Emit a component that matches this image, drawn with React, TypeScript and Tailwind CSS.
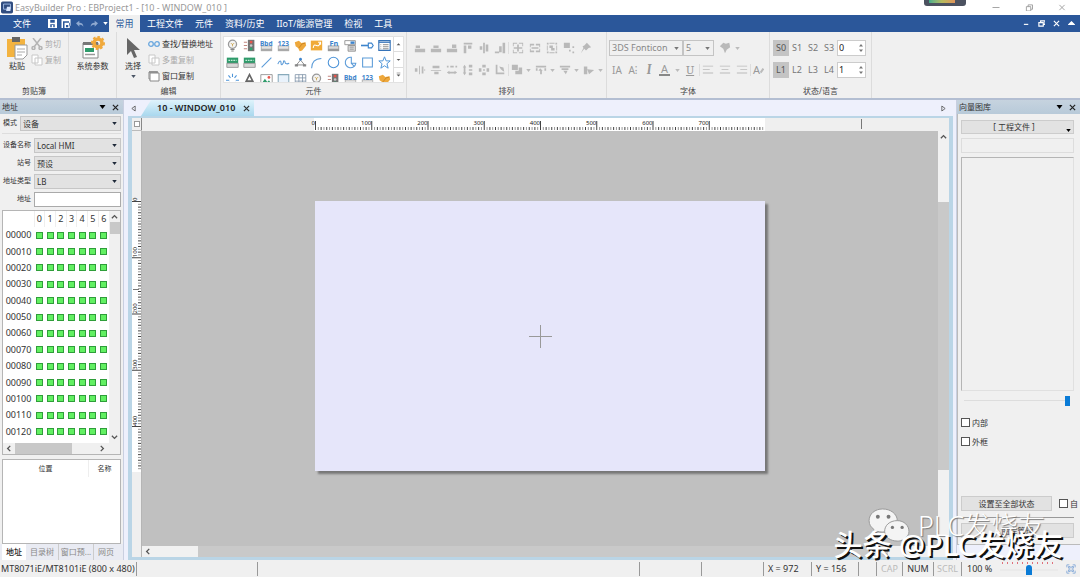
import React from 'react';

type IconName =
  | 'bulb' | 'traffic' | 'word' | 'num' | 'tag' | 'swap' | 'fn' | 'combo' | 'slide' | 'list'
  | 'green' | 'line' | 'wave' | 'poly' | 'arc' | 'circle' | 'pie' | 'rect' | 'star'
  | 'burst' | 'letter' | 'picture' | 'frame' | 'grid';

const svgText = '"Noto Sans", "Noto Sans CJK SC", sans-serif';

const shapes: Record<IconName, React.ReactNode> = {
  bulb: (
    <>
      <circle cx="8" cy="6.5" r="5" fill="#f3f3f3" stroke="#999" strokeWidth="1.6" />
      <path d="M8 9V6M6 5l2 2 2-2" stroke="#c9a24a" fill="none" />
      <path d="M5.5 12h5v1.5h-5zM6.5 14h3v1.5h-3z" fill="#888" />
    </>
  ),
  traffic: (
    <>
      <path d="M6 1h8v14H6z" fill="#747474" />
      <circle cx="10" cy="3.8" r="1.8" fill="#e8554c" />
      <circle cx="10" cy="8" r="1.6" fill="#c9c9c9" />
      <circle cx="10" cy="12.2" r="1.8" fill="#2fa46d" />
      <path d="M1 4h4M1 8h4M1 12h4" stroke="#b46b62" />
    </>
  ),
  word: (
    <>
      <path d="M1 8h14v7H1z" fill="#a9a9a9" />
      <path d="M2 9h12v3H2z" fill="#e3e3e3" />
      <text x="0" y="8" fontSize="8" fontWeight="700" fill="#3d84cc" fontFamily={svgText}>Bbd</text>
    </>
  ),
  num: (
    <>
      <path d="M1 8h14v7H1z" fill="#a9a9a9" />
      <path d="M2 9h12v3H2z" fill="#e3e3e3" />
      <text x="1" y="8" fontSize="8" fontWeight="700" fill="#3d84cc" fontFamily={svgText}>123</text>
    </>
  ),
  tag: (
    <>
      <path d="M1 4l5-2 3 3 5-1 1 4-5 6-3 1-2-4-3-2z" fill="#eea83c" />
      <path d="M6 11l4-5 4-1" stroke="#c57f1c" fill="none" />
    </>
  ),
  swap: (
    <>
      <path d="M1 2h14v12H1z" fill="#f0aa37" />
      <path d="M4 11c0-4 2-4 4-3s4 0 4-3M10 4h3v3" stroke="#fff" strokeWidth="1.3" fill="none" />
    </>
  ),
  fn: (
    <>
      <path d="M1 8h14v7H1z" fill="#999" />
      <path d="M2 9h12v3H2z" fill="#d8d8d8" />
      <text x="3" y="8" fontSize="9" fontWeight="700" fill="#3d84cc" fontFamily={svgText}>Fn</text>
    </>
  ),
  combo: (
    <>
      <path d="M1 2h13v5H1z" fill="#fff" stroke="#888" />
      <path d="M8 3h5v3H8z" fill="#3d84cc" />
      <path d="M5 8h9v7H5z" fill="#ddd" stroke="#888" />
      <path d="M7 10h5M7 12.5h5" stroke="#888" />
    </>
  ),
  slide: (
    <>
      <path d="M0 8h9" stroke="#3d84cc" strokeWidth="2" />
      <path d="M9 5h4l2 3-2 3H9z" fill="#fff" stroke="#3d84cc" strokeWidth="1.4" />
    </>
  ),
  list: (
    <>
      <path d="M1 2h14v12H1z" fill="#fff" stroke="#3673b8" strokeWidth="1.4" />
      <path d="M1 4h14" stroke="#3673b8" strokeWidth="1.5" />
      <path d="M6 7h7M6 9.5h7M6 12h7M3 7h1M3 9.5h1M3 12h1" stroke="#777" />
    </>
  ),
  green: (
    <>
      <path d="M1 2h14v7H1z" fill="#2f9b6b" />
      <path d="M3 5.5h10" stroke="#c8ecd9" strokeWidth="1.6" strokeDasharray="2 1" />
      <path d="M1 9h14v5H1z" fill="#d8d8d8" stroke="#8c8c8c" />
    </>
  ),
  line: <path d="M2 14L14 2" stroke="#5b9bd8" strokeWidth="1.3" />,
  wave: <path d="M1 10c2-5 4-5 4-1s3 0 3-2 2-1 2 1 3 2 5 1" stroke="#5b9bd8" strokeWidth="1.3" fill="none" />,
  poly: (
    <>
      <path d="M3 11L8 5l5 6z" fill="none" stroke="#777" />
      <circle cx="8" cy="4" r="1.7" fill="#3d84cc" />
      <path d="M1 10h4v3H1zM11 10h4v3h-4z" fill="#888" />
    </>
  ),
  arc: <path d="M2 15C2 8 6 3 14 3" stroke="#5b9bd8" strokeWidth="1.3" fill="none" />,
  circle: <circle cx="8" cy="8" r="6.5" fill="none" stroke="#4d94d8" strokeWidth="1.3" />,
  pie: <path d="M9 1.5a6.5 6.5 0 1 0 5.5 7.5H9zM9 9l4 4" fill="none" stroke="#5b9bd8" strokeWidth="1.3" />,
  rect: <path d="M2 2.5h12v11H2z" fill="none" stroke="#5b9bd8" strokeWidth="1.3" />,
  star: <path d="M8 1l2 5h5l-4 3.500 1.500 5.500L8 12l-4.500 3L5 9.500 1 6h5z" fill="none" stroke="#4d94d8" strokeWidth="1.2" />,
  burst: <path d="M8 1v4M3 3l2.500 3M13 3l-2.500 3M0 9h4M12 9h4M3 14l2-3M13 14l-2-3M8 12v3" stroke="#4d94d8" strokeWidth="1.300" />,
  letter: <path d="M2 14L8 2l6 12M4.500 10h7" fill="none" stroke="#666" strokeWidth="2" />,
  picture: (
    <>
      <path d="M1 2h14v12H1z" fill="#fff" stroke="#888" />
      <path d="M2 13l4-6 3 4 2-2 3 4z" fill="#2f9b6b" />
      <circle cx="11" cy="5.500" r="1.700" fill="#e8554c" />
    </>
  ),
  frame: <path d="M1.500 2h13v12h-13z" fill="#e9f2fb" stroke="#8ab" strokeWidth="1.300" />,
  grid: <path d="M1.500 2h13v12h-13zM1.500 6h13M1.500 10h13M6 2v12M10.500 2v12" fill="#fff" stroke="#7f93a8" />,
};

const gallery: IconName[] = [
  'bulb', 'traffic', 'word', 'num', 'tag', 'swap', 'fn', 'combo', 'slide', 'list',
  'green', 'green', 'line', 'wave', 'poly', 'arc', 'circle', 'pie', 'rect', 'star',
  'burst', 'letter', 'picture', 'frame', 'grid', 'bulb', 'traffic', 'word', 'num', 'tag',
];

// Disabled arrange tools, drawn on a 14px grid
const arrangeTop = [
  'M1 8h12v4H1zM2 4h5v3H2z',
  'M1 8h12v4H1zM4 4h6v3H4z',
  'M1 8h12v4H1zM7 3h5v4H7z',
  'M2 1h10v2H2zM2 4h3v9H2zM7 4h4v4H7z',
  'M6 1h2v12H6zM9 3h3v8H9zM2 5h3v4H2z',
  'M10 1h3v12h-3zM6 5h3v7H6zM1 11h5v2H1z',
];
const arrangeTopB = [
  'M1 1h5v1H2v3H1zM8 1h5v4h-1V2H8zM1 9h1v3h4v1H1zM12 9h1v4H8v-1h4zM6 3h2v8H6zM2 6h10v2H2z',
  'M1 2h5v2H2v2H1zM8 2h5v4h-1V4H8zM1 8h1v2h4v2H1zM12 8h1v4H8v-2h4zM3 6h8v2H3z',
  'M1 1h2v2H1zM11 1h2v2h-2zM1 11h2v2H1zM11 11h2v2h-2zM4 1h6v1H4zM4 12h6v1H4zM1 4h1v6H1zM12 4h1v6h-1zM4 4h4v3H4zM6 7h4v3H6z',
  'M1 1h7v6H1zM7 9h2v2H7zM11 5h2v2h-2zM11 11h2v2h-2z',
  'M8 1l5 5-3 1-2 2-1 1-2-2-4 5 3-6-1-2 2-1z',
];
const arrangeBottom = [
  'M1 5h3v4H1zM6 2h1v10H6zM9 3h2v8H9zM12 6h1v2h-1z',
  'M3 2h8v3H3zM1 7h12v1H1zM5 9h5v3H5z',
  'M1 2h2v2H1zM5 2h4v2H5zM11 2h2v2h-2zM1 10l3-2v1h6V8l3 2-3 2v-1H4v1z',
  'M3 1l2 3H4v6h1l-2 3-2-3h1V4H1zM8 1h4v3H8zM8 6h4v2H8zM8 10h4v3H8z',
  'M5 1h4v3H5zM1 5h3v4H1zM10 5h3v4h-3zM5 10h4v3H5zM6 6h2v2H6z',
  'M2 1h2v9h8v2H2zM6 3l5 1 1 5-2-1-2-2z',
];
const arrangeBottomB = [
  'M1 1h7v6H1zM5 8h4v4H5zM9 4h4v8H9z',
  'M1 2h12v2H1zM6 5l3 3H8v4H6V8H4zM1 5h2v3H1zM11 5h2v3h-2z',
  'M1 2h12v2H1zM3 5h8v2H3zM5 8h5l-2 4z',
  'M1 3h4v9H1zM5 6l8 1-6 5z',
];

function Glyph({ d }: { d: string }) {
  return (
    <svg viewBox="0 0 14 14" className="h-3 w-3" fill="#b9b9b9">
      <path d={d} />
    </svg>
  );
}

function Caret({ className = 'text-gray-800' }: { className?: string }) {
  return (
    <svg viewBox="0 0 6 4" className={`h-[3px] w-[5px] shrink-0 ${className}`} fill="currentColor">
      <path d="M0 0h6L3 4z" />
    </svg>
  );
}

function Chevron({ d }: { d: string }) {
  return (
    <svg viewBox="0 0 8 8" className="h-[7px] w-[7px]" fill="none" stroke="#555" strokeWidth="1.500">
      <path d={d} />
    </svg>
  );
}

function Group({ label, className, children }: { label?: string; className: string; children?: React.ReactNode }) {
  return (
    <section className={`flex h-full shrink-0 flex-col border-r border-[#dcdcdc] ${className}`}>
      <div className="min-h-0 flex-1">{children}</div>
      <div className="h-[15px] text-center text-[8px] leading-[15px] text-[#444]">{label}</div>
    </section>
  );
}

function Spin({ value, label }: { value: string; label: string }) {
  return (
    <div className="flex h-4 w-[29px] items-center border border-[#ccc] bg-white pr-[2px]">
      <input aria-label={label} defaultValue={value} className="w-full min-w-0 px-[1px] text-[9px] text-[#222] outline-none" />
      <svg viewBox="0 0 5 12" className="h-3 w-1 shrink-0" fill="#777">
        <path d="M0 4h5L2.500 1zM0 8h5l-2.500 3z" />
      </svg>
    </div>
  );
}

function StateRow({ items, value, name }: { items: string[]; value: string; name: string }) {
  return (
    <div className="flex h-[22px] items-center">
      {items.map((item) => (
        <button
          key={item}
          type="button"
          className={`h-4 w-4 text-[9px] leading-4 ${item === 'S0' || item === 'L1' ? 'bg-[#c4c4c4] text-[#555]' : 'text-[#777]'}`}
        >
          {item}
        </button>
      ))}
      <Spin value={value} label={name} />
    </div>
  );
}

function Ribbon() {
  const small = 'flex h-4 items-center gap-[2px] text-[8px] whitespace-nowrap';
  return (
    <div className="flex h-[68px] shrink-0 overflow-hidden border-b-2 border-[#b3bed2] bg-[#f0f0f0]">
      <Group label="剪贴簿" className="w-[69px]">
        <div className="flex gap-1 pt-1 pl-[7px]">
          <button type="button" className="flex w-5 flex-col items-center text-[8px] leading-[12px] text-[#333]">
            <svg viewBox="0 0 22 24" className="h-6 w-[22px]">
              <path d="M1 3h18v18H1z" fill="#f3b340" />
              <path d="M6 1h8v5H6z" fill="#666" />
              <path d="M9 9h12v10l-4 4H9z" fill="#fff" stroke="#999" />
              <path d="M11 13h8M11 16h8M11 19h5" stroke="#aaa" />
            </svg>
            <span className="whitespace-nowrap">粘贴</span>
          </button>
          <div className="text-[#aaa]">
            <button type="button" className={small}>
              <svg viewBox="0 0 12 12" className="h-3 w-3" fill="none" stroke="#b4b4b4" strokeWidth="1.500">
                <path d="M2 0l7 9M10 0L3 9" />
                <circle cx="2.500" cy="10" r="1.500" />
                <circle cx="9.500" cy="10" r="1.500" />
              </svg>
              剪切
            </button>
            <button type="button" className={small}>
              <svg viewBox="0 0 12 12" className="h-3 w-3" fill="#fff" stroke="#c8c8c8">
                <path d="M1 1h6v8H1zM4 4h7v7H4z" />
              </svg>
              复制
            </button>
          </div>
        </div>
      </Group>
      <Group className="w-12">
        <button type="button" className="flex w-full flex-col items-center pt-1 text-[8px] leading-[12px] text-[#333]">
          <svg viewBox="0 0 24 24" className="h-6 w-6">
            <path d="M2 7h15v15H2z" fill="#fff" stroke="#888" />
            <path d="M2 6h15v3H2z" fill="#777" />
            <path d="M4 12h9v4H4z" fill="#2f9b6b" />
            <path d="M4 18.500h10" stroke="#999" strokeWidth="1.500" />
            <circle cx="17" cy="7" r="4" fill="none" stroke="#f0a93c" strokeWidth="3.500" />
            <circle cx="17" cy="7" r="6" fill="none" stroke="#f0a93c" strokeWidth="2" strokeDasharray="2.500 2" />
          </svg>
          系统参数
        </button>
      </Group>
      <Group label="编辑" className="w-[104px]">
        <div className="flex gap-1 pt-1 pl-[5px]">
          <button type="button" className="flex w-[22px] flex-col items-center text-[8px] leading-[12px] text-[#333]">
            <svg viewBox="0 0 16 24" className="h-6 w-4">
              <path d="M2 2v17l4-4 3 7 3-1-3-7h6z" fill="#666" />
            </svg>
            <span className="whitespace-nowrap">选择</span>
            <Caret className="mt-[3px] text-gray-600" />
          </button>
          <div className="text-[#333]">
            <button type="button" className={small}>
              <svg viewBox="0 0 12 12" className="h-3 w-3" fill="none" stroke="#6aa7de" strokeWidth="1.300">
                <circle cx="3" cy="6" r="2.300" />
                <circle cx="9" cy="6" r="2.300" />
              </svg>
              查找/替换地址
            </button>
            <button type="button" className={`${small} text-[#aaa]`}>
              <svg viewBox="0 0 12 12" className="h-3 w-3" fill="#fff" stroke="#c8c8c8">
                <path d="M1 1h6v8H1zM4 4h7v7H4z" />
              </svg>
              多重复制
            </button>
            <button type="button" className={small}>
              <svg viewBox="0 0 12 12" className="h-3 w-3" fill="#fff" stroke="#888">
                <path d="M1 2h8v7H1z" />
                <path d="M2 3h9v8H2z" />
                <path d="M1 2h9" strokeWidth="1.500" />
              </svg>
              窗口复制
            </button>
          </div>
        </div>
      </Group>
      <Group label="元件" className="w-[186px]">
        <div className="mt-1 ml-[2px] flex h-[47px] w-[181px] border border-[#e2e2e2] bg-white">
          <div className="grid flex-1 auto-rows-[17px] grid-cols-10 overflow-hidden">
            {gallery.map((name, i) => (
              <button key={i} type="button" aria-label={name} className="flex items-center justify-center">
                <svg viewBox="0 0 16 16" className="h-[13px] w-[13px]">{shapes[name]}</svg>
              </button>
            ))}
          </div>
          <div className="flex w-[10px] flex-col divide-y divide-[#ddd] border-l border-[#ddd]">
            {['M1 5h6L4 2z', 'M1 3h6L4 6z', 'M1 1h6v1H1zM1 4h6L4 7z'].map((d) => (
              <button key={d} type="button" aria-label="scroll" className="flex flex-1 items-center justify-center">
                <svg viewBox="0 0 8 8" className="h-[5px] w-[5px]" fill="#555"><path d={d} /></svg>
              </button>
            ))}
          </div>
        </div>
      </Group>
      <Group label="排列" className="w-[200px]">
        <div className="flex flex-col pt-[5px] pl-[5px]">
          <div className="flex h-[22px] items-center">
            <div className="flex w-[97px] justify-around border-r border-[#ddd]">
              {arrangeTop.map((d) => <Glyph key={d} d={d} />)}
            </div>
            <div className="flex w-[86px] justify-around">
              {arrangeTopB.map((d) => <Glyph key={d} d={d} />)}
            </div>
          </div>
          <div className="flex h-[22px] items-center">
            <div className="flex w-[97px] justify-around border-r border-[#ddd]">
              {arrangeBottom.map((d) => <Glyph key={d} d={d} />)}
            </div>
            <div className="flex w-[96px] justify-around">
              {arrangeBottomB.map((d) => (
                <span key={d} className="flex items-center gap-[3px]">
                  <Glyph d={d} />
                  <Caret className="text-[#bbb]" />
                </span>
              ))}
            </div>
          </div>
        </div>
      </Group>
      <Group label="字体" className="w-[163px]">
        <div className="pt-[5px] pl-[2px]">
          <div className="flex h-[22px] items-center text-[#888]">
            <Select id="font" value="3DS Fonticon" className="w-[74px]" dim />
            <Select id="size" value="5" className="w-[31px]" dim />
            <span className="ml-[5px] flex items-center gap-1">
              <Glyph d="M1 5l4-4 3 1 4-1 1 5-4 3-2 4-2-5z" />
              <Caret className="text-[#bbb]" />
            </span>
          </div>
          <div className="flex h-[22px] items-center text-[10px] text-[#999]">
            <button type="button" className="w-4">IA</button>
            <button type="button" className="w-4">A⁝</button>
            <button type="button" className="w-4 font-serif text-[13px] font-bold italic">I</button>
            <button type="button" className="mx-[2px] border-b-2 border-[#888] px-[2px] text-[11px] leading-[10px]">A</button>
            <Caret className="mx-[3px] text-[#bbb]" />
            <button type="button" className="w-[14px] font-serif text-[12px] underline">U</button>
            <span className="mx-[2px] flex gap-[5px] border-x border-[#ddd] px-[2px]">
              {['M1 2h12v1H1zM1 6h8v1H1zM1 10h12v1H1z', 'M1 2h12v1H1zM3 6h8v1H3zM1 10h12v1H1z', 'M1 2h12v1H1zM5 6h8v1H5zM1 10h12v1H1z'].map((d) => (
                <Glyph key={d} d={d} />
              ))}
            </span>
            <button type="button" className="flex items-center text-[11px]">
              A
              <svg viewBox="0 0 6 10" className="h-2 w-1" fill="none" stroke="#bbb" strokeWidth="3"><path d="M1 9l4-6" /></svg>
            </button>
          </div>
        </div>
      </Group>
      <Group label="状态/语言" className="w-[102px]">
        <div className="pt-[5px] pl-[3px]">
          <StateRow items={['S0', 'S1', 'S2', 'S3']} value="0" name="state" />
          <StateRow items={['L1', 'L2', 'L3', 'L4']} value="1" name="language" />
        </div>
      </Group>
    </div>
  );
}

function Select({ id, value, className, dim }: { id: string; value: string; className: string; dim?: boolean }) {
  return (
    <div className={`relative flex items-center border ${dim ? 'h-4 border-[#c4c4c4] bg-[#f0f0f0]' : 'h-[15px] border-[#c6c6c6] bg-[#e2e2e2]'} ${className}`}>
      <select
        id={id}
        aria-label={dim ? id : undefined}
        defaultValue={value}
        className={`h-full w-full appearance-none px-[2px] leading-[12px] outline-none ${dim ? 'text-[9px]' : 'text-[8px]'}`}
      >
        <option>{value}</option>
      </select>
      <div className="pointer-events-none absolute right-[3px]">
        <Caret className={dim ? 'text-[#777]' : 'text-gray-800'} />
      </div>
    </div>
  );
}

function PanelHeader({ title }: { title: string }) {
  return (
    <header className="flex h-[14px] shrink-0 items-center bg-linear-to-b from-[#c6d3df] to-[#b8cad9] px-[2px] text-[8px] text-[#333]">
      <h2 className="flex-1">{title}</h2>
      <button type="button" aria-label="menu" className="mr-[6px]">
        <svg viewBox="0 0 6 4" className="h-1 w-[7px]"><path d="M0 0h6L3 4z" /></svg>
      </button>
      <button type="button" aria-label="close" className="mr-[2px]">
        <svg viewBox="0 0 8 8" className="h-[7px] w-[7px]" stroke="#222" strokeWidth="1.400"><path d="M1 1l6 6M7 1L1 7" /></svg>
      </button>
    </header>
  );
}

const addresses = ['00000', '00010', '00020', '00030', '00040', '00050', '00060', '00070', '00080', '00090', '00100', '00110', '00120'];
const bits = [0, 1, 2, 3, 4, 5, 6];

function AddressPanel() {
  const row = 'flex items-center justify-end gap-[3px] text-[7px] whitespace-nowrap';
  return (
    <aside className="flex w-[124px] shrink-0 flex-col border-r border-[#c9cfe0] bg-[#f0f0f0]">
      <PanelHeader title="地址" />
      <form className="flex flex-col gap-[3px] px-[2px] pt-[2px]">
        <div className={`${row} mb-[1px] border-b border-[#ddd] pb-[2px]`}>
          <label htmlFor="mode">模式</label>
          <Select id="mode" value="设备" className="w-[101px]" />
        </div>
        <div className={row}>
          <label htmlFor="device">设备名称</label>
          <Select id="device" value="Local HMI" className="w-[87px]" />
        </div>
        <div className={row}>
          <label htmlFor="station">站号</label>
          <Select id="station" value="预设" className="w-[87px]" />
        </div>
        <div className={row}>
          <label htmlFor="type">地址类型</label>
          <Select id="type" value="LB" className="w-[87px]" />
        </div>
        <div className={row}>
          <label htmlFor="addr">地址</label>
          <input id="addr" className="h-[15px] w-[87px] border border-[#aaa] bg-white px-[2px] text-[8px]" />
        </div>
      </form>
      <div className="mx-[2px] mt-[3px] flex min-h-0 flex-1 flex-col border border-[#b5b5b5] bg-white">
        <div className="flex min-h-0 flex-1">
          <div className="min-w-0 flex-1 overflow-hidden">
            <table className="h-[229px] w-full table-fixed border-collapse text-[9px] leading-[16px] text-[#333]">
              <thead>
                <tr>
                  <th className="w-[31px]" />
                  {bits.map((b) => <th key={b} className="border-l border-[#eee] p-0 font-normal">{b}</th>)}
                </tr>
              </thead>
              <tbody>
                {addresses.map((a) => (
                  <tr key={a}>
                    <th className="p-0 text-center font-normal">{a}</th>
                    {bits.map((b) => (
                      <td key={b} className="p-0">
                        <div className="mx-auto h-[7px] w-[7px] border border-[#2f9e3a] bg-[#62f062]" />
                      </td>
                    ))}
                  </tr>
                ))}
              </tbody>
            </table>
          </div>
          <div className="flex w-[11px] flex-col items-center justify-between bg-[#f0f0f0] py-[2px]">
            <Chevron d="M1 6l3-3 3 3" />
            <div className="mt-[2px] mb-auto h-3 w-[10px] bg-[#c8c8c8]" />
            <Chevron d="M1 2l3 3 3-3" />
          </div>
        </div>
        <div className="flex h-[11px] items-center bg-[#f0f0f0] pr-[14px] pl-[2px]">
          <Chevron d="M6 1L3 4l3 3" />
          <div className="mx-[3px] h-full w-[57px] bg-[#c8c8c8]" />
          <div className="ml-auto"><Chevron d="M2 1l3 3-3 3" /></div>
        </div>
      </div>
      <div className="mx-[2px] mt-1 flex h-[85px] border border-[#b5b5b5] bg-white text-center text-[7px] leading-[17px] text-[#333]">
        <div className="w-[85px]">位置</div>
        <div className="h-[17px] flex-1 border-l border-[#eee]">名称</div>
      </div>
      <nav className="flex h-4 items-center bg-[#e9ebf3] pl-[2px] text-[8px] whitespace-nowrap text-[#888]">
        <button type="button" className="h-full w-6 bg-white font-medium text-[#222]">地址</button>
        <button type="button" className="h-full w-[33px] border-r border-[#ccc]">目录树</button>
        <button type="button" className="h-full w-[35px] border-r border-[#ccc]">窗口预...</button>
        <button type="button" className="h-full w-6">网页</button>
      </nav>
    </aside>
  );
}

const UNIT = 45 / 8;

function RulerTop() {
  return (
    <svg className="h-[13px] w-full bg-[#efefef]" fontSize="6" fontFamily={svgText} fill="#222">
      <rect x="172" y="0" width="451" height="13" fill="#fff" />
      {Array.from({ length: 160 }, (_, i) => (
        <rect key={i} x={173 + (i * UNIT) / 2} y={i % 20 === 0 ? 3 : 9} width="1" height={i % 20 === 0 ? 9 : 3} fill={i % 2 ? '#999' : '#444'} />
      ))}
      {[0, 100, 200, 300, 400, 500, 600, 700].map((n) => (
        <text key={n} x={173 + (n / 10) * UNIT} y="7" textAnchor="end">{n}</text>
      ))}
      <path d="M719.500 1v10" stroke="#777" />
    </svg>
  );
}

function RulerLeft() {
  return (
    <svg className="h-full w-[9px] shrink-0 bg-[#efefef]" fontSize="6" fontFamily={svgText} fill="#222">
      <rect x="0" y="69" width="9" height="272" fill="#fff" />
      {Array.from({ length: 96 }, (_, i) => (
        <rect key={i} x={i % 20 === 0 ? 0 : 6} y={70 + (i * UNIT) / 2} width={i % 20 === 0 ? 9 : 3} height="1" fill={i % 2 ? '#999' : '#444'} />
      ))}
      {[0, 100, 200, 300, 400].map((n) => (
        <text key={n} transform={`translate(5 ${70 + (n / 10) * UNIT}) rotate(-90)`}>{n}</text>
      ))}
      <path d="M1 158.500h6" stroke="#777" />
    </svg>
  );
}

function Editor() {
  return (
    <main className="flex min-w-0 flex-1 flex-col bg-[#eef0fc]">
      <div className="flex h-4 shrink-0 items-center pr-[10px] pl-[7px]">
        <svg viewBox="0 0 6 8" className="h-[7px] w-[5px]" fill="none" stroke="#555"><path d="M5 1v6L1 4z" /></svg>
        <div className="ml-[5px] flex h-full items-center gap-[8px] bg-linear-to-b from-[#dff3fb] to-[#a9d8ee] pr-[4px] pl-[16px] text-[9px] font-semibold text-[#222] [clip-path:polygon(10px_0,100%_0,100%_100%,0_100%)]">
          10 - WINDOW_010
          <button type="button" aria-label="close tab">
            <svg viewBox="0 0 8 8" className="h-[7px] w-[7px]" stroke="#333" strokeWidth="1.400"><path d="M1 1l6 6M7 1L1 7" /></svg>
          </button>
        </div>
        <svg viewBox="0 0 6 8" className="ml-auto h-[7px] w-[5px]" fill="none" stroke="#555"><path d="M1 1v6l4-3z" /></svg>
      </div>
      <div className="mr-[3px] ml-1 flex min-h-0 flex-1 flex-col border-x-4 border-t-2 border-b-[3px] border-[#bad5e6] bg-[#efefef]">
        <div className="flex h-[13px] shrink-0 border-b border-[#bbb]">
          <div className="flex w-[10px] shrink-0 items-center justify-center border-r border-[#888]">
            <div className="h-[6px] w-[6px] border border-[#999] bg-white" />
          </div>
          <div className="min-w-0 flex-1"><RulerTop /></div>
        </div>
        <div className="flex min-h-0 flex-1">
          <RulerLeft />
          <div className="flex min-w-0 flex-1 flex-col border-l border-[#b5b5b5]">
            <div className="flex min-h-0 flex-1">
              {/* design surface */}
              <div className="relative min-w-0 flex-1 overflow-hidden bg-[#c0c0c0]">
                <div className="absolute top-[70px] left-[173px] flex h-[270px] w-[450px] items-center justify-center bg-[#e6e6fa] shadow-[3px_3px_2px_#777]">
                  <svg viewBox="0 0 23 23" className="h-[23px] w-[23px]" stroke="#999"><path d="M11.500 0v23M0 11.500h23" /></svg>
                </div>
              </div>
              <div className="flex w-[11px] shrink-0 flex-col items-center bg-[#f1f1f1] pt-[2px]">
                <Chevron d="M1 6l3-3 3 3" />
                <div className="mt-[62px] h-[268px] w-full bg-[#c9c9c9]" />
              </div>
            </div>
            <div className="flex h-[11px] shrink-0 items-center bg-[#f1f1f1] pr-[14px] pl-[2px]">
              <Chevron d="M6 1L3 4l3 3" />
              <div className="ml-[47px] h-full w-[690px] bg-[#c9c9c9]" />
              <div className="ml-auto"><Chevron d="M2 1l3 3-3 3" /></div>
            </div>
          </div>
        </div>
      </div>
    </main>
  );
}

function Check({ label }: { label: string }) {
  return (
    <label className="flex h-[19px] items-center gap-[2px] text-[8px] whitespace-nowrap text-[#333]">
      <input type="checkbox" className="h-[9px] w-[9px] shrink-0 appearance-none border border-[#555] bg-white" />
      {label}
    </label>
  );
}

function LibraryPanel() {
  const button = 'block h-[15px] border border-[#ccc] bg-[#e2e2e2] text-[8px] leading-[12px] text-[#333]';
  return (
    <aside className="flex w-[124px] shrink-0 flex-col border-l border-[#c9cfe0] bg-[#eef0fc]">
      <PanelHeader title="向量图库" />
      <div className="flex min-h-0 flex-1 flex-col overflow-hidden border-l border-[#bbb] bg-[#f0f0f0] pt-[6px] pl-[3px]">
        <button type="button" className="mr-[6px] flex h-[14px] shrink-0 items-center border border-[#ccc] bg-[#e2e2e2] pr-[2px] text-[8px] text-[#333]">
          <span className="flex-1">[ 工程文件 ]</span>
          <Caret className="mt-[6px] text-black" />
        </button>
        <input aria-label="search" className="mt-[4px] mr-[6px] h-[15px] shrink-0 border border-[#ddd] bg-[#f0f0f0]" />
        <div className="mt-[4px] mr-[6px] min-h-0 flex-1 border border-[#b5b5b5] border-r-[#e0e0e0] border-b-[#e0e0e0]" />
        <input
          type="range"
          aria-label="size"
          defaultValue="100"
          className="mt-[4px] mr-[10px] ml-[3px] h-[11px] shrink-0 appearance-none bg-linear-to-b from-transparent from-45% via-[#ddd] via-50% to-transparent to-55% [&::-webkit-slider-thumb]:h-[10px] [&::-webkit-slider-thumb]:w-[5px] [&::-webkit-slider-thumb]:appearance-none [&::-webkit-slider-thumb]:bg-[#0a7bd6]"
        />
        <div className="mt-[7px] mb-[43px]">
          <Check label="内部" />
          <Check label="外框" />
        </div>
        <div className="flex shrink-0 items-center gap-[7px] overflow-hidden">
          <button type="button" className={`${button} w-[91px] shrink-0`}>设置至全部状态</button>
          <Check label="自" />
        </div>
        <div className="mt-1 mr-[6px] shrink-0 border-t border-[#999] pt-[5px]">
          <button type="button" className={`${button} w-full`}>图库管理</button>
        </div>
        <div className="h-[6px] shrink-0" />
      </div>
      <div className="h-4 shrink-0 border-t border-[#bbb]" />
    </aside>
  );
}

function TopBars() {
  const tabs = ['工程文件', '元件', '资料/历史', 'IIoT/能源管理', '检视', '工具'];
  return (
    <>
      <div className="relative flex h-[15px] shrink-0 items-center bg-white text-[9px] text-[#999]">
        <svg viewBox="0 0 14 14" className="mr-[2px] ml-[1px] h-[13px] w-3">
          <rect width="14" height="14" rx="2" fill="#314d80" />
          <path d="M3 3h8v6H3z" fill="none" stroke="#aac4ef" />
          <path d="M7 6h4v5H6z" fill="#d6e4fc" />
        </svg>
        <h1>EasyBuilder Pro : EBProject1 - [10 - WINDOW_010 ]</h1>
        <div className="absolute top-0 right-[114px] h-[6px] w-[42px] rounded-b-[3px] bg-[#4c5260] px-[5px]">
          <div className="h-[3px] w-[26px] bg-linear-to-r from-[#3fae8c] via-[#b5bb5e] to-[#e0935a]" />
        </div>
        <div className="ml-auto flex gap-[25px] pr-[14px]">
          {['M0 4h8', 'M1 3h5v5H1zM3 3V1h5v5H6', 'M1 1l6 6M7 1L1 7'].map((d) => (
            <button key={d} type="button" aria-label="window control">
              <svg viewBox="0 0 8 8" className="h-[7px] w-[8px]" fill="none" stroke="#999"><path d={d} /></svg>
            </button>
          ))}
        </div>
      </div>
      <nav className="flex h-[17px] shrink-0 items-center bg-[#2b579a] text-[9px] whitespace-nowrap text-white">
        <button type="button" className="w-[44px]">文件</button>
        <div className="flex w-[65px] items-center gap-1 pl-[4px]">
          <svg viewBox="0 0 12 12" className="h-[9px] w-[9px]" fill="#fff"><path fillRule="evenodd" d="M0 0h12v12H0zM3 1v4h6V1zM3 7v4h2V8h2v3h2V7z" /></svg>
          <svg viewBox="0 0 12 12" className="h-[9px] w-[10px]" fill="#fff"><path fillRule="evenodd" d="M0 0h12v9h-2V3H2v9H0zM4 5h7v7H4zM6 8v3h3V8z" /></svg>
          <svg viewBox="0 0 12 12" className="h-[8px] w-[10px]" fill="#8fa9d0"><path d="M0 5l5-4v3c4 0 6 2 6 6-2-3-4-3-6-3v3z" /></svg>
          <svg viewBox="0 0 12 12" className="h-[8px] w-[10px]" fill="#8fa9d0"><path d="M12 5L7 1v3C3 4 1 6 1 10c2-3 4-3 6-3v3z" /></svg>
          <Caret className="text-white" />
        </div>
        <button type="button" className="h-full w-[31px] bg-[#f0f0f0] text-[#2b579a]">常用</button>
        <div className="flex gap-3 pl-[7px]">
          {tabs.map((tab) => <button key={tab} type="button">{tab}</button>)}
        </div>
        <div className="ml-auto flex gap-2 pr-[5px]">
          {['M1 5h5', 'M1 3h5v4H1zM3 3V1h5v4H6', 'M1 1l6 6M7 1L1 7', 'M1 5l3-3 3 3z'].map((d, i) => (
            <button key={d} type="button" aria-label="document control">
              <svg viewBox="0 0 8 8" className="h-[7px] w-[7px]" fill={i === 3 ? '#fff' : 'none'} stroke="#fff" strokeWidth="1.300"><path d={d} /></svg>
            </button>
          ))}
        </div>
      </nav>
    </>
  );
}

function StatusBar() {
  const cell = 'h-[14px] shrink-0 border-r border-[#999] leading-[14px]';
  return (
    <footer className="flex h-[17px] shrink-0 items-center bg-[#f0f0f0] text-[9px] whitespace-nowrap text-[#333]">
      <div className={`${cell} w-[137px] pl-[1px]`}>MT8071iE/MT8101iE (800 x 480)</div>
      <div className={`${cell} w-[121px]`} />
      <div className="h-[14px] flex-1 border-r border-[#999]" />
      <div className={`${cell} w-[62px]`} />
      <div className={`${cell} w-[62px]`} />
      <div className={`${cell} w-[48px] pl-1`}>X = 972</div>
      <div className={`${cell} w-[47px] pl-1`}>Y = 156</div>
      <div className={`${cell} w-[18px]`} />
      <div className={`${cell} w-[26px] text-center text-[#bbb]`}>CAP</div>
      <div className={`${cell} w-[31px] text-center`}>NUM</div>
      <div className={`${cell} w-[28px] text-center text-[#bbb]`}>SCRL</div>
      <div className="flex w-[118px] shrink-0 items-center pl-[5px]">
        <span className="w-[33px]">100 %</span>
        <div className="w-[58px]">
          <div className="mx-[2px] h-[2px] bg-[repeating-linear-gradient(to_right,#e0707c_0_1px,transparent_1px_5px)]" />
          <input
            type="range"
            aria-label="zoom"
            defaultValue="50"
            className="block h-[12px] w-full appearance-none bg-linear-to-b from-transparent from-45% via-[#ccc] via-50% to-transparent to-55% [&::-webkit-slider-thumb]:h-[10px] [&::-webkit-slider-thumb]:w-[6px] [&::-webkit-slider-thumb]:appearance-none [&::-webkit-slider-thumb]:rounded-t-[3px] [&::-webkit-slider-thumb]:bg-[#0a7bd6]"
          />
        </div>
        <svg viewBox="0 0 12 12" className="ml-2 h-[10px] w-[10px]" fill="none" stroke="#7fa6d6">
          <path d="M1 4V1h3M8 1h3v3M11 8v3H8M4 11H1V8M3 3h2v2H3zM7 3h2v2H7zM3 7h2v2H3zM7 7h2v2H7z" />
        </svg>
      </div>
    </footer>
  );
}

function Watermark() {
  return (
    <div className="pointer-events-none absolute right-[17px] bottom-[18px] text-white">
      <div className="flex items-center justify-end gap-[7px] pr-[18px]">
        <svg viewBox="0 0 44 36" className="h-[35px] w-[43px]" fill="#f4f4f4" stroke="#999" strokeWidth="1">
          <path d="M15 1C7 1 1 6 1 13c0 4 2 7 5 9l-1 5 5-3c2 1 7 1 9 0 7-1 11-6 11-11C30 6 23 1 15 1z" />
          <path d="M30 13c-8 0-13 5-13 11s6 10 13 10c2 0 3 0 5-1l4 2-1-4c3-2 4-4 4-7 0-6-5-11-12-11z" />
          <g fill="#777" stroke="none">
            <circle cx="10" cy="9" r="2" /><circle cx="21" cy="9" r="2" />
            <circle cx="25" cy="20" r="1.700" /><circle cx="35" cy="20" r="1.700" />
          </g>
        </svg>
        <span className="text-[27px] leading-[32px] font-light [text-shadow:1px_1px_1px_#777]">PLC发烧友</span>
      </div>
      <div className="-mt-[12px] text-right text-[29px] leading-[28px] font-medium whitespace-nowrap [text-shadow:2px_2px_0_#111]">头条 @PLC发烧友</div>
    </div>
  );
}

export default function App() {
  return (
    <div className='relative flex h-screen min-h-[480px] flex-col overflow-hidden bg-[#eef0fc] font-["Noto_Sans","Noto_Sans_CJK_SC",sans-serif] text-[#333]'>
      <TopBars />
      <Ribbon />
      <div className="flex min-h-0 flex-1">
        <AddressPanel />
        <Editor />
        <LibraryPanel />
      </div>
      <StatusBar />
      <Watermark />
    </div>
  );
}
